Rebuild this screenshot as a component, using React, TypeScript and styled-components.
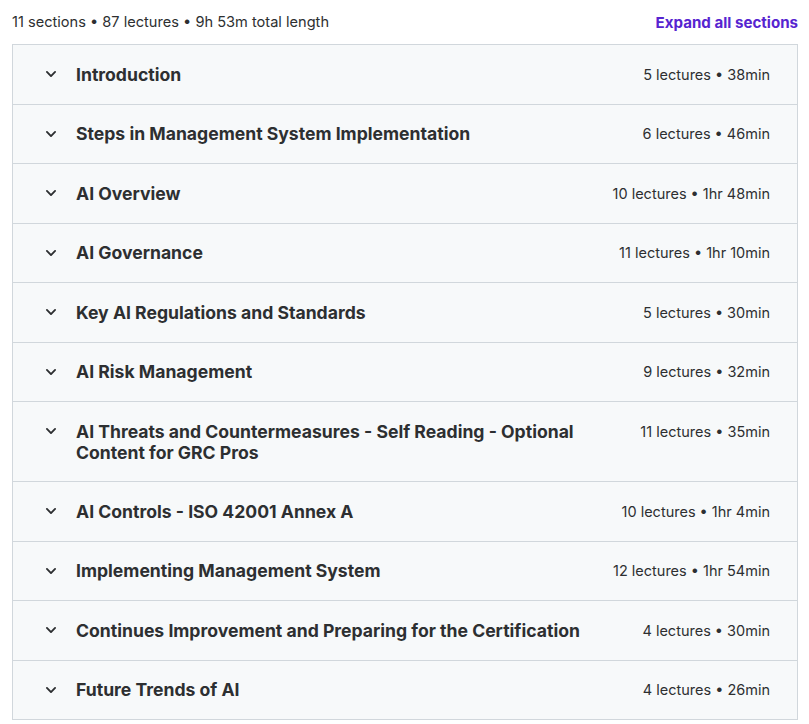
import React from "react";
import styled, { createGlobalStyle } from "styled-components";

const GlobalStyle = createGlobalStyle`
  html, body {
    margin: 0;
    padding: 0;
    background: #ffffff;
    font-family: Inter, "Noto Sans", sans-serif;
    color: #2d2f31;
  }
`;

const Page = styled.div`
  width: 809px;
  padding: 10px 11px 0 12px;
  box-sizing: border-box;
`;

const Summary = styled.div`
  display: flex;
  justify-content: space-between;
  align-items: center;
  height: 24px;
  margin-bottom: 10px;
`;

const Stats = styled.span`
  font-size: 14.6px;
  color: #2d2f31;
`;

const ExpandLink = styled.a`
  font-size: 15.1px;
  font-weight: 700;
  color: #5624d0;
  cursor: pointer;
`;

const List = styled.div`
  border: 1px solid #d1d7dc;
`;

const Row = styled.div`
  display: flex;
  align-items: flex-start;
  background: #f7f9fa;
  padding: 18.5px 27px 18.5px 31px;
  box-sizing: border-box;
  border-top: 1px solid #d1d7dc;
  &:first-child {
    border-top: none;
  }
`;

const Chevron = styled.span`
  display: flex;
  align-items: center;
  height: 21.5px;
  width: 14px;
  margin-right: 18px;
  flex-shrink: 0;
`;

const Title = styled.div`
  flex: 1;
  font-size: 17.6px;
  font-weight: 700;
  line-height: 21px;
  max-width: 510px;
`;

const Meta = styled.div`
  margin-left: auto;
  font-size: 14.5px;
  line-height: 21.5px;
  white-space: nowrap;
  color: #2d2f31;
`;

const sections = [
  ["Introduction", "5 lectures • 38min"],
  ["Steps in Management System Implementation", "6 lectures • 46min"],
  ["AI Overview", "10 lectures • 1hr 48min"],
  ["AI Governance", "11 lectures • 1hr 10min"],
  ["Key AI Regulations and Standards", "5 lectures • 30min"],
  ["AI Risk Management", "9 lectures • 32min"],
  [
    "AI Threats and Countermeasures - Self Reading - Optional Content for GRC Pros",
    "11 lectures • 35min",
  ],
  ["AI Controls - ISO 42001 Annex A", "10 lectures • 1hr 4min"],
  ["Implementing Management System", "12 lectures • 1hr 54min"],
  ["Continues Improvement and Preparing for the Certification", "4 lectures • 30min"],
  ["Future Trends of AI", "4 lectures • 26min"],
];

const ChevronIcon = () => (
  <svg width="14" height="14" viewBox="0 0 24 24" fill="none">
    <path
      d="M5 8.5l7 7 7-7"
      stroke="#2d2f31"
      strokeWidth="3.2"
      strokeLinecap="round"
      strokeLinejoin="round"
    />
  </svg>
);

export default function App() {
  return (
    <Page>
      <GlobalStyle />
      <Summary>
        <Stats>11 sections • 87 lectures • 9h 53m total length</Stats>
        <ExpandLink>Expand all sections</ExpandLink>
      </Summary>
      <List>
        {sections.map(([title, meta]) => (
          <Row key={title}>
            <Chevron>
              <ChevronIcon />
            </Chevron>
            <Title>{title}</Title>
            <Meta>{meta}</Meta>
          </Row>
        ))}
      </List>
    </Page>
  );
}
